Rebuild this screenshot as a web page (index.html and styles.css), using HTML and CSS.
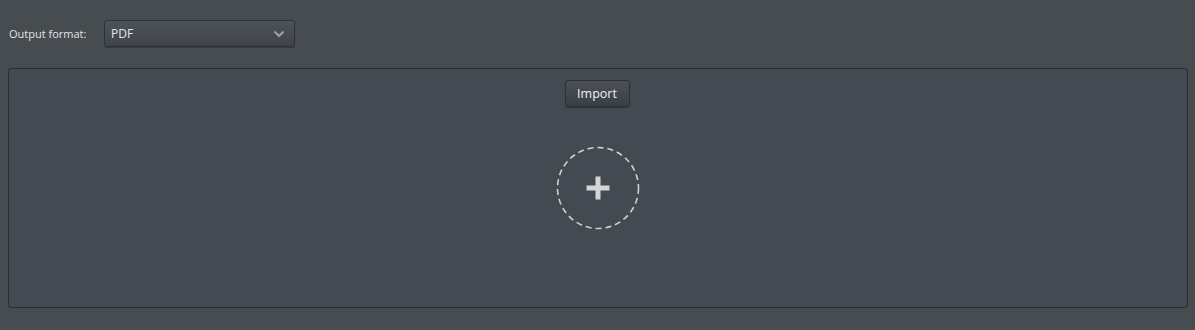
FILE: index.html
```html
<!DOCTYPE html>
<html>
<head>
<meta charset="utf-8">
<link rel="stylesheet" href="styles.css">
</head>
<body>
<div class="toolbar">
  <span class="label">Output format:</span>
  <div class="select">
    <span class="select-value">PDF</span>
    <svg class="chevron" width="12" height="8" viewBox="0 0 12 8"><path d="M1.5 1.5 L6 6 L10.5 1.5" fill="none" stroke="#9aa0a6" stroke-width="2.2"/></svg>
  </div>
</div>
<div class="dropzone">
  <button class="import">Import</button>
  <div class="add">
    <svg width="84" height="84" viewBox="0 0 84 84">
      <circle cx="42" cy="42" r="40.5" fill="none" stroke="#cfd1d3" stroke-width="1.6" stroke-dasharray="6 4"/>
      <rect x="30.5" y="39.5" width="23" height="5" fill="#d4d5d6"/>
      <rect x="39.5" y="30.5" width="5" height="23" fill="#d4d5d6"/>
    </svg>
  </div>
</div>
</body>
</html>
```
FILE: styles.css
```css
html, body {
  margin: 0;
  padding: 0;
  background: #464c50;
  width: 1195px;
  height: 330px;
  overflow: hidden;
  font-family: "Open Sans", "DejaVu Sans", sans-serif;
  color: #e4e4e4;
}
.toolbar {
  display: flex;
  align-items: center;
  height: 26px;
  padding: 20px 0 0 9px;
}
.label {
  font-size: 11px;
  width: 95px;
}
.select {
  box-sizing: border-box;
  width: 191px;
  height: 27px;
  display: flex;
  align-items: center;
  justify-content: space-between;
  padding: 0 9px 0 6px;
  background: linear-gradient(#4d535a, #3f444a);
  border: 1px solid #2f3337;
  border-radius: 3px;
  box-shadow: 0 1px 1px rgba(0,0,0,0.25);
}
.select-value {
  font-size: 12px;
  color: #e6e6e6;
}
.chevron {
  display: block;
  margin-top: 1px;
}
.dropzone {
  box-sizing: border-box;
  margin: 22px 0 0 8px;
  width: 1180px;
  height: 240px;
  background: #434a51;
  border: 1px solid #2b3035;
  border-radius: 3px;
  display: flex;
  flex-direction: column;
  align-items: center;
  padding-top: 11px;
}
.import {
  box-sizing: border-box;
  width: 65px;
  height: 27px;
  margin-left: -2px;
  font-family: "Open Sans", "DejaVu Sans", sans-serif;
  font-size: 12.5px;
  color: #f0f0f0;
  background: linear-gradient(#4b5157, #3a3f44);
  border: 1px solid #2d3135;
  border-radius: 3px;
  box-shadow: 0 1px 1px rgba(0,0,0,0.25);
  padding: 0;
}
.add {
  margin-top: 39px;
  width: 84px;
  height: 84px;
}
.add svg {
  display: block;
}
```
